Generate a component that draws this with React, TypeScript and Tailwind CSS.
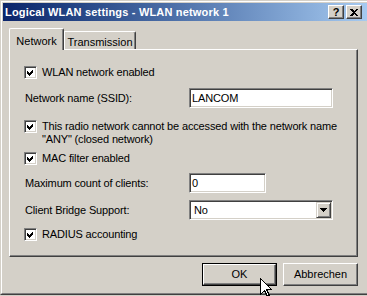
import React from 'react'

const font = "font-['Liberation_Sans',Arial,sans-serif]"

function Check({ checked = true }: { checked?: boolean }) {
  return (
    <div className="w-[13px] h-[13px] shrink-0 bg-white border border-t-[#808080] border-l-[#808080] border-b-white border-r-white shadow-[inset_1px_1px_#404040,inset_-1px_-1px_#d4d0c8] flex items-center justify-center">
      {checked && (
        <svg width="7" height="7" viewBox="0 0 7 7" shapeRendering="crispEdges">
          <path d="M0 2 L2 4 L6 0 L6 3 L2 7 L0 5 Z" fill="#000" />
        </svg>
      )}
    </div>
  )
}

function Field({ value, width }: { value: string; width: string }) {
  return (
    <div className={`${width} h-[20px] bg-white border border-t-[#808080] border-l-[#808080] border-b-white border-r-white shadow-[inset_1px_1px_#404040,inset_-1px_-1px_#d4d0c8] flex items-center pl-[2px] text-[11px]`}>
      {value}
    </div>
  )
}

function Button({ label, isDefault = false }: { label: string; isDefault?: boolean }) {
  return (
    <div className={`w-[75px] h-[23px] ${isDefault ? 'border border-black' : ''}`}>
      <div className="w-full h-full bg-[#d4d0c8] border border-t-white border-l-white border-b-[#404040] border-r-[#404040] shadow-[inset_-1px_-1px_#808080] flex items-center justify-center text-[11px]">
        {label}
      </div>
    </div>
  )
}

export default function App() {
  return (
    <div className={`${font} relative w-[367px] h-[296px] bg-[#d4d0c8] text-black overflow-hidden`}>
      <div className="h-[295px] border-t border-l border-[#d4d0c8] border-b border-b-[#404040]">
        <div className="h-full border-t border-l border-white border-b border-b-[#808080] pt-px pl-px">
          {/* title bar */}
          <div className="h-[18px] flex items-center justify-between bg-linear-to-r from-[#0a246a] to-[#a6caf0] pl-[2px] pr-[5px]">
            <span className="text-white font-bold text-[11px] leading-none tracking-[0.18px]">Logical WLAN settings - WLAN network 1</span>
            <div className="flex gap-[2px]">
              <div className="w-[16px] h-[14px] bg-[#d4d0c8] border border-t-white border-l-white border-b-[#404040] border-r-[#404040] shadow-[inset_-1px_-1px_#808080] flex items-center justify-center text-[11px] font-bold leading-none pt-px">
                ?
              </div>
              <div className="w-[16px] h-[14px] bg-[#d4d0c8] border border-t-white border-l-white border-b-[#404040] border-r-[#404040] shadow-[inset_-1px_-1px_#808080] flex items-center justify-center">
                <svg width="8" height="7" viewBox="0 0 8 7" shapeRendering="crispEdges">
                  <path d="M0 0h2l2 2 2-2h2L5 3.5 8 7H6L4 5 2 7H0l3-3.5z" fill="#000" />
                </svg>
              </div>
            </div>
          </div>

          {/* tabs */}
          <div className="mt-[7px] pl-[6px] flex items-end h-[21px]">
            <div className="relative z-10 w-[55px] h-[22px] -mb-px bg-[#d4d0c8] border-t border-l border-white border-r border-r-[#404040] rounded-tl-[2px] rounded-tr-[2px] shadow-[inset_-1px_0_#808080] flex justify-center pt-[4px] text-[11px]">
              Network
            </div>
            <div className="w-[72px] h-[18px] bg-[#d4d0c8] border-t border-l border-white border-r border-r-[#404040] rounded-tr-[2px] shadow-[inset_-1px_0_#808080] flex justify-center pt-[2px] text-[11px]">
              Transmission
            </div>
          </div>

          {/* panel */}
          <div className="ml-[6px] w-[349px] h-[208px] border border-t-white border-l-white border-b-[#404040] border-r-[#404040] shadow-[inset_-1px_-1px_#808080] pt-[16px] pl-[14px] text-[11px] tracking-[-0.15px]">
            <div className="flex items-center h-[13px]">
              <Check />
              <span className="ml-[5px]">WLAN network enabled</span>
            </div>

            <div className="mt-[9px] flex items-center h-[20px]">
              <span className="w-[165px] pl-px">Network name (SSID):</span>
              <Field value="LANCOM" width="w-[144px]" />
            </div>

            <div className="mt-[12px] flex items-start">
              <Check />
              <span className="ml-[5px] leading-[13px]">
                This radio network cannot be accessed with the network name
                <br />
                "ANY" (closed network)
              </span>
            </div>

            <div className="mt-[6px] flex items-center h-[13px]">
              <Check />
              <span className="ml-[5px]">MAC filter enabled</span>
            </div>

            <div className="mt-[8px] flex items-center h-[20px]">
              <span className="w-[165px] pl-px">Maximum count of clients:</span>
              <Field value="0" width="w-[77px]" />
            </div>

            <div className="mt-[7px] flex items-center h-[20px]">
              <span className="w-[165px] pl-px">Client Bridge Support:</span>
              <div className="w-[144px] h-[20px] bg-white border border-t-[#808080] border-l-[#808080] border-b-white border-r-white shadow-[inset_1px_1px_#404040,inset_-1px_-1px_#d4d0c8] flex items-center pl-[4px] pr-[1px]">
                <span className="flex-1">No</span>
                <div className="w-[15px] h-[16px] bg-[#d4d0c8] border border-t-[#d4d0c8] border-l-[#d4d0c8] border-b-[#404040] border-r-[#404040] shadow-[inset_1px_1px_white,inset_-1px_-1px_#808080] flex items-center justify-center">
                  <svg width="7" height="4" viewBox="0 0 7 4" shapeRendering="crispEdges">
                    <path d="M0 0h7L3.5 4z" fill="#000" />
                  </svg>
                </div>
              </div>
            </div>

            <div className="mt-[8px] flex items-center h-[13px]">
              <Check />
              <span className="ml-[5px]">RADIUS accounting</span>
            </div>
          </div>

          {/* buttons */}
          <div className="ml-[6px] w-[349px] mt-[6px] flex justify-end gap-[6px]">
            <Button label="OK" isDefault />
            <Button label="Abbrechen" />
          </div>
        </div>
      </div>

      {/* mouse pointer */}
      <svg className="absolute left-[260px] top-[278px]" width="12" height="19" viewBox="0 0 12 19" shapeRendering="crispEdges">
        <path d="M0.5 0.5 V16.5 L4.5 12.5 L7.5 18.5 L9.5 17.5 L6.5 11.5 H11.5 Z" fill="#fff" stroke="#000" strokeWidth="1" />
      </svg>
    </div>
  )
}
